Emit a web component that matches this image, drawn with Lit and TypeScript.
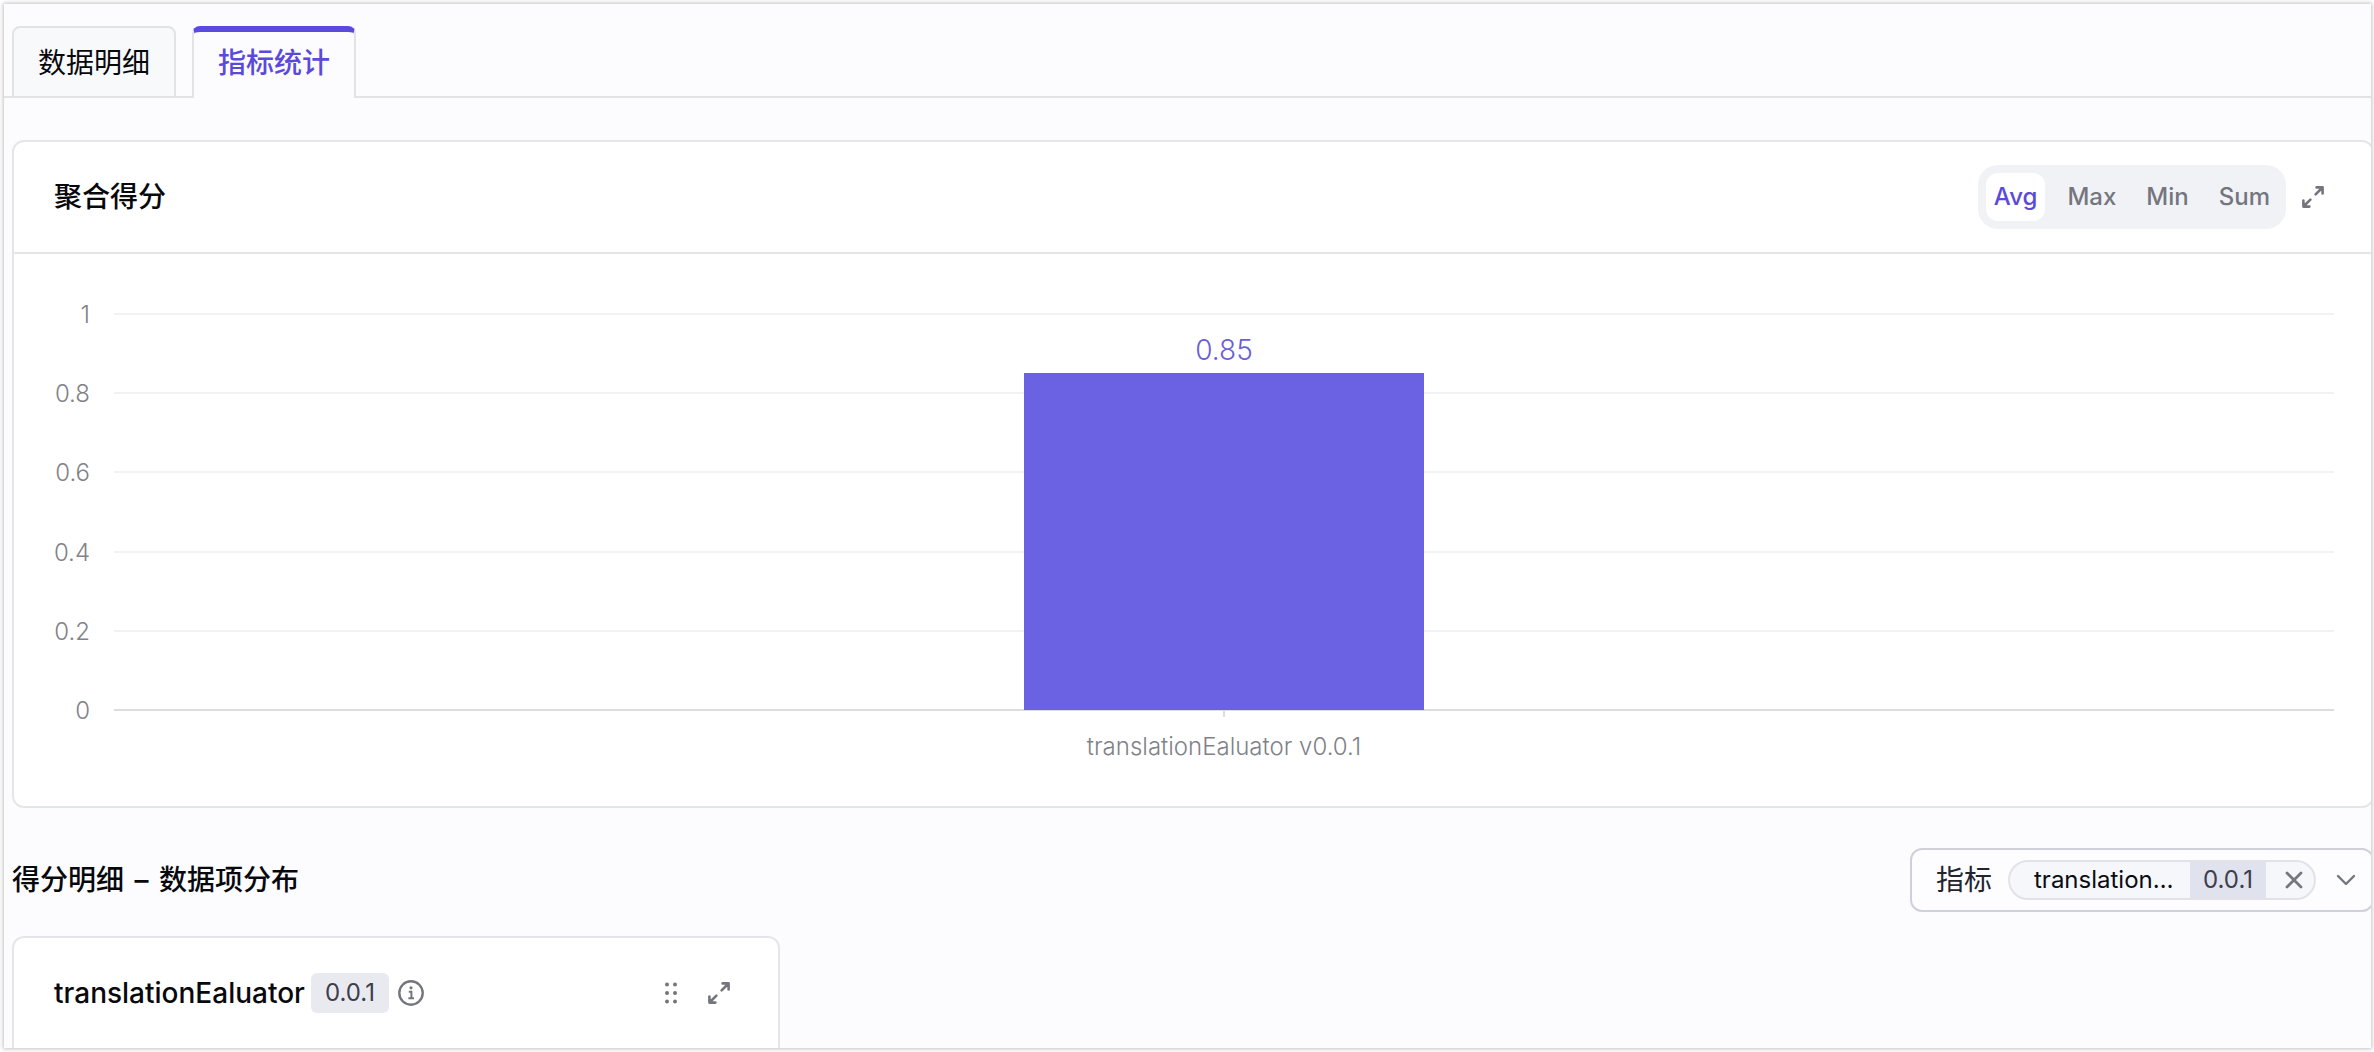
import { LitElement, html, svg, css } from "lit";
import { customElement, property, state } from "lit/decorators.js";
import { classMap } from "lit/directives/class-map.js";

const expandIcon = svg`
  <g fill="none" stroke="currentColor" stroke-width="2.6" stroke-linecap="round" stroke-linejoin="round">
    <path d="M14.6 1.4h6v6M20 2l-6.4 6.4" />
    <path d="M1.4 14.6v6h6M2 20l6.4-6.4" />
  </g>`;

const controlReset = css`
  button,
  select {
    appearance: none;
    margin: 0;
    padding: 0;
    border: 0;
    background: none;
    color: inherit;
    font: inherit;
    cursor: pointer;
  }
  svg {
    display: block;
  }
`;

interface Score {
  name: string;
  value: number;
}

@customElement("score-chart")
export class ScoreChart extends LitElement {
  @property({ attribute: false }) scores: Score[] = [];

  static styles = css`
    :host {
      display: grid;
      grid-template-columns: 76px 1fr;
      column-gap: 24px;
      padding: 46px 38px 44px 0;
      font-weight: 300;
      color: #808288;
    }
    .axis {
      display: flex;
      flex-direction: column;
      justify-content: space-between;
      height: 426px;
      text-align: right;
      font-size: 24px;
      line-height: 30px;
    }
    .plot {
      display: grid;
      margin: 13px 0 15px;
    }
    .lines,
    .bars {
      grid-area: 1 / 1;
    }
    .lines {
      display: flex;
      flex-direction: column;
      justify-content: space-between;
    }
    .line {
      height: 2px;
      background: #f2f2f4;
    }
    .line:last-child {
      background: #dcdde1;
    }
    .bars {
      display: flex;
      justify-content: space-around;
      align-items: flex-end;
      margin: 1px 0;
      z-index: 1;
    }
    .bar {
      display: flex;
      flex-direction: column;
      width: 18%;
      background: #6b61e3;
    }
    .value {
      margin-top: -41px;
      text-align: center;
      font-size: 28px;
      line-height: 36px;
      color: #6b5fd6;
    }
    .names {
      grid-column: 2;
      display: flex;
      justify-content: space-around;
      margin-top: -15px;
    }
    .name {
      display: flex;
      flex-direction: column;
      align-items: center;
      gap: 15px;
      font-size: 24px;
      line-height: 30px;
    }
    .tick {
      width: 2px;
      height: 6px;
      background: #dcdde1;
    }
  `;

  render() {
    return html`
      <div class="axis">
        ${["1", "0.8", "0.6", "0.4", "0.2", "0"].map((t) => html`<span>${t}</span>`)}
      </div>
      <div class="plot">
        <div class="lines">
          ${[1, 0.8, 0.6, 0.4, 0.2, 0].map(() => html`<div class="line"></div>`)}
        </div>
        <div class="bars">
          ${this.scores.map(
            (s) => html`<div class="bar" style="height:${s.value * 100}%">
              <span class="value">${s.value}</span>
            </div>`
          )}
        </div>
      </div>
      <div class="names">
        ${this.scores.map(
          (s) => html`<div class="name"><i class="tick"></i><span>${s.name}</span></div>`
        )}
      </div>
    `;
  }
}

@customElement("metric-picker")
export class MetricPicker extends LitElement {
  static styles = [
    controlReset,
    css`
      :host {
        box-sizing: border-box;
        display: flex;
        align-items: center;
        height: 64px;
        padding: 0 14px 0 24px;
        border: 2px solid #cfd0d9;
        border-radius: 12px;
        background: #fdfdff;
      }
      label {
        margin-right: 16px;
        font-size: 28px;
        line-height: 40px;
        color: #22242f;
      }
      .tag {
        display: flex;
        align-items: stretch;
        height: 36px;
        border: 2px solid #e2e3e8;
        border-radius: 20px;
        background: #f6f7fa;
        overflow: hidden;
        font-size: 24px;
        line-height: 36px;
      }
      select {
        width: 148px;
        margin: 0 8px 0 24px;
        overflow: hidden;
        text-overflow: ellipsis;
        white-space: nowrap;
        color: #0b0c12;
      }
      .version {
        width: 76px;
        text-align: center;
        background: #e0e2ee;
        color: #3c3e4c;
      }
      .remove {
        display: grid;
        place-items: center;
        width: 48px;
        padding-left: 8px;
        color: #74767e;
      }
      .toggle {
        margin-left: 18px;
        color: #74767e;
      }
    `,
  ];

  private openList() {
    this.renderRoot.querySelector("select")?.showPicker();
  }

  render() {
    return html`
      <label for="metric">指标</label>
      <div class="tag">
        <select id="metric">
          <option>translationEaluator</option>
        </select>
        <span class="version">0.0.1</span>
        <button class="remove" type="button">
          <svg width="20" height="20" viewBox="0 0 20 20">
            <path d="M3 3l14 14M17 3L3 17" fill="none" stroke="currentColor" stroke-width="2.8" stroke-linecap="round" />
          </svg>
        </button>
      </div>
      <button class="toggle" type="button" @click=${this.openList}>
        <svg width="24" height="24" viewBox="0 0 24 24">
          <path d="M4 8l8 8l8-8" fill="none" stroke="currentColor" stroke-width="2.4" stroke-linecap="round" stroke-linejoin="round" />
        </svg>
      </button>
    `;
  }
}

@customElement("app-root")
export class AppRoot extends LitElement {
  @state() private tab = "指标统计";
  @state() private mode = "Avg";

  static styles = [
    controlReset,
    css`
      :host {
        display: flex;
        box-sizing: border-box;
        height: 100vh;
        padding: 4px 3px 4px 4px;
        background: #fff;
        font-family: Inter, "Noto Sans CJK SC", sans-serif;
        color: #08090d;
      }
      .frame {
        flex: 1;
        min-width: 0;
        overflow: hidden;
        background: #fcfcff;
        box-shadow: 0 0 4px 1px rgba(0, 0, 0, 0.24);
      }
      .tabs {
        display: flex;
        gap: 16px;
        padding: 22px 8px 0;
        background: linear-gradient(#e2e3e7, #e2e3e7) bottom / 100% 2px no-repeat;
      }
      .tab {
        height: 72px;
        padding: 2px 24px 0;
        border: 2px solid #e2e3e7;
        border-radius: 8px 8px 0 0;
        background: #f7f9fb;
        font-size: 28px;
        line-height: 40px;
      }
      .tab.active {
        padding-bottom: 6px;
        border-top: 6px solid #5b49e0;
        border-bottom: 0;
        background: #fcfcff;
        color: #5b49dc;
        font-weight: 500;
      }
      .body {
        margin-right: -3px;
        padding: 42px 0 0 8px;
      }
      .card {
        border: 2px solid #e5e6ea;
        border-radius: 12px;
        background: #fff;
      }
      h2,
      h3 {
        margin: 0;
        font-size: 28px;
        line-height: 40px;
        font-weight: 500;
      }
      .head {
        display: flex;
        align-items: center;
        height: 110px;
        padding: 0 48px 0 40px;
        border-bottom: 2px solid #e5e6ea;
      }
      .spacer {
        flex: 1;
      }
      .modes {
        display: flex;
        gap: 14px;
        padding: 8px;
        margin-right: 16px;
        border-radius: 20px;
        background: #f1f2f6;
      }
      .mode {
        height: 48px;
        padding: 0 8px;
        border-radius: 12px;
        font-size: 24px;
        line-height: 32px;
        font-weight: 500;
        color: #74767f;
      }
      .mode.active {
        background: #fff;
        color: #5b49dc;
      }
      .icon {
        color: #74767d;
      }
      .section {
        display: flex;
        align-items: center;
        justify-content: space-between;
        padding: 40px 0 24px;
      }
      .dash {
        margin: 0 3px;
      }
      .detail {
        width: 32.5%;
        min-width: 640px;
        box-sizing: border-box;
        padding-bottom: 40px;
      }
      .detail .head {
        border-bottom: 0;
      }
      .badge {
        margin: 0 8px 0 6px;
        padding: 4px 14px;
        border-radius: 6px;
        background: #e9eaf0;
        font-size: 24px;
        line-height: 32px;
        color: #3c3e4c;
      }
      .drag {
        margin-right: 24px;
      }
    `,
  ];

  render() {
    return html`
      <main class="frame">
        <div class="tabs" role="tablist">
          ${["数据明细", "指标统计"].map(
            (t) => html`<button
              type="button"
              role="tab"
              aria-selected=${t === this.tab}
              class=${classMap({ tab: true, active: t === this.tab })}
              @click=${() => (this.tab = t)}
            >${t}</button>`
          )}
        </div>
        <div class="body">
          <section class="card">
            <header class="head">
              <h2>聚合得分</h2>
              <span class="spacer"></span>
              <div class="modes">
                ${["Avg", "Max", "Min", "Sum"].map(
                  (m) => html`<button
                    type="button"
                    aria-pressed=${m === this.mode}
                    class=${classMap({ mode: true, active: m === this.mode })}
                    @click=${() => (this.mode = m)}
                  >${m}</button>`
                )}
              </div>
              <button class="icon" type="button">
                <svg width="22" height="22" viewBox="0 0 22 22">${expandIcon}</svg>
              </button>
            </header>
            <score-chart .scores=${[{ name: "translationEaluator v0.0.1", value: 0.85 }]}></score-chart>
          </section>
          <div class="section">
            <h2>得分明细 <span class="dash">–</span> 数据项分布</h2>
            <metric-picker></metric-picker>
          </div>
          <section class="card detail">
            <header class="head">
              <h3>translationEaluator</h3>
              <span class="badge">0.0.1</span>
              <svg class="icon" width="28" height="28" viewBox="0 0 28 28">
                <circle cx="14" cy="14" r="11.7" fill="none" stroke="currentColor" stroke-width="2.4" />
                <circle cx="14" cy="8.8" r="1.6" fill="currentColor" />
                <path d="M11.8 12.8h2.6v6.2M11.4 19.2h5.6" fill="none" stroke="currentColor" stroke-width="2" />
              </svg>
              <span class="spacer"></span>
              <button class="icon drag" type="button">
                <svg width="26" height="26" viewBox="0 0 26 26" fill="currentColor">
                  ${[4.5, 13, 21.5].map(
                    (y) => svg`<circle cx="9" cy=${y} r="2" /><circle cx="17" cy=${y} r="2" />`
                  )}
                </svg>
              </button>
              <button class="icon" type="button">
                <svg width="22" height="22" viewBox="0 0 22 22">${expandIcon}</svg>
              </button>
            </header>
          </section>
        </div>
      </main>
    `;
  }
}
